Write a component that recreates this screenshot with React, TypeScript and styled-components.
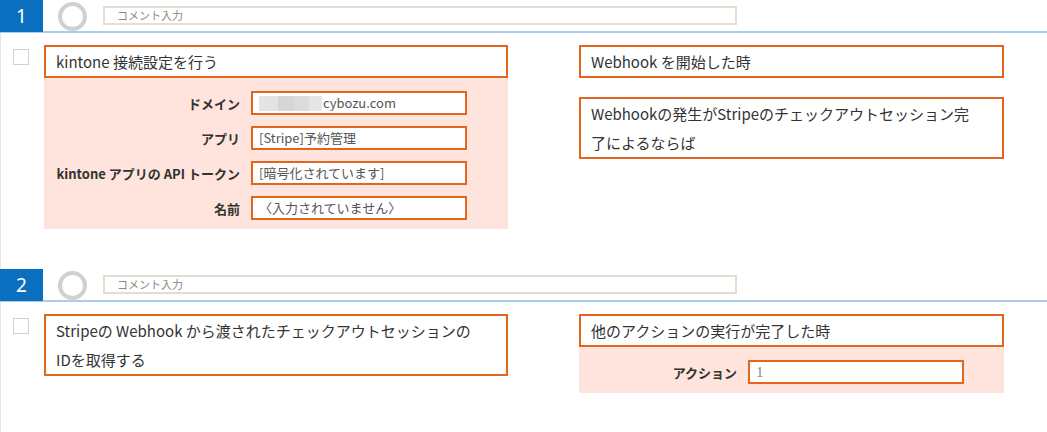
import styled, { createGlobalStyle } from 'styled-components'

const GlobalStyle = createGlobalStyle`
	body {
		margin: 0;
		background: #fff;
		font-family: 'Noto Sans CJK JP', 'Noto Sans', sans-serif;
		color: #333;
	}
`

const orange = '#e2661f'

const Step = styled.section`
	width: 1047px;
`

const StepHeader = styled.div`
	display: flex;
	align-items: flex-start;
	height: 31px;
	border-bottom: 2px solid #a9cdec;
`

const Badge = styled.div`
	width: 43px;
	height: 32px;
	background: #0b6fbf;
	color: #fff;
	font-family: 'Noto Sans', sans-serif;
	font-size: 19px;
	display: flex;
	align-items: center;
	justify-content: center;
	flex-shrink: 0;
`

const Ring = styled.svg`
	margin: 1px 0 0 14px;
	flex-shrink: 0;
`

const CommentInput = styled.div`
	margin: 6px 0 0 15px;
	width: 606px;
	height: 15px;
	border: 2px solid #e6ddd2;
	padding: 0 12px;
	font-size: 11px;
	line-height: 15px;
	color: #888;
`

const StepBody = styled.div<{ $bottom: number }>`
	display: flex;
	padding: 12px 0 ${p => p.$bottom}px 0;
	border-left: 1px solid #e6e6e6;
`

const LeftCol = styled.div`
	display: flex;
	align-items: flex-start;
	width: 507px;
	padding-left: 12px;
	box-sizing: border-box;
	gap: 15px;
`

const RightCol = styled.div`
	display: flex;
	flex-direction: column;
	gap: 19px;
	width: 425px;
	margin-left: 71px;
`

const Checkbox = styled.div`
	width: 14px;
	height: 14px;
	border: 1px solid #d9cfc4;
	margin-top: 4px;
	flex-shrink: 0;
`

const Card = styled.div`
	flex: 1;
	display: flex;
	flex-direction: column;
`

const TitleBox = styled.div`
	border: 2px solid ${orange};
	padding: 0 26px 0 10px;
	font-size: 15px;
	line-height: 29px;
	color: #333;
	background: #fff;
`

const Panel = styled.div<{ $label: number }>`
	background: #fee4dc;
	display: grid;
	grid-template-columns: ${p => p.$label}px 216px;
	column-gap: 11px;
	row-gap: 11px;
	padding: 13px 0 9px;
	align-items: center;
`

const Label = styled.div`
	text-align: right;
	font-size: 13px;
	font-weight: bold;
	color: #333;
	white-space: nowrap;
`

const Field = styled.div<{ $serif?: boolean }>`
	height: 20px;
	border: 2px solid ${orange};
	background: #fff;
	padding: 0 6px;
	font-size: ${p => (p.$serif ? 15 : 13)}px;
	line-height: 20px;
	color: ${p => (p.$serif ? '#888' : '#555')};
	white-space: nowrap;
	display: flex;
	align-items: center;
	font-family: ${p => (p.$serif ? "'Liberation Serif', serif" : 'inherit')};
`

const Blur = styled.span`
	display: inline-block;
	width: 63px;
	height: 15px;
	background: linear-gradient(90deg, #e4e4e4 0 30%, #d6d6d6 30% 55%, #dcdcdc 55% 80%, #e6e6e6 80% 100%);
	margin-right: 1px;
`

const Progress = () => (
	<Ring width="31" height="31" viewBox="0 0 31 31">
		<circle cx="15.5" cy="15.5" r="12.5" fill="none" stroke="#d0d0d0" strokeWidth="4" />
	</Ring>
)

const Header = ({ n }: { n: number }) => (
	<StepHeader>
		<Badge>{n}</Badge>
		<Progress />
		<CommentInput>コメント入力</CommentInput>
	</StepHeader>
)

export default function App() {
	return (
		<>
			<GlobalStyle />
			<Step>
				<Header n={1} />
				<StepBody $bottom={40}>
					<LeftCol>
						<Checkbox />
						<Card>
							<TitleBox>kintone 接続設定を行う</TitleBox>
							<Panel $label={196}>
								<Label>ドメイン</Label>
								<Field>
									<Blur />
									cybozu.com
								</Field>
								<Label>アプリ</Label>
								<Field>[Stripe]予約管理</Field>
								<Label>kintone アプリの API トークン</Label>
								<Field>[暗号化されています]</Field>
								<Label>名前</Label>
								<Field>〈入力されていません〉</Field>
							</Panel>
						</Card>
					</LeftCol>
					<RightCol>
						<TitleBox>Webhook を開始した時</TitleBox>
						<TitleBox>Webhookの発生がStripeのチェックアウトセッション完了によるならば</TitleBox>
					</RightCol>
				</StepBody>
			</Step>
			<Step>
				<Header n={2} />
				<StepBody $bottom={40}>
					<LeftCol>
						<Checkbox />
						<Card>
							<TitleBox>Stripeの Webhook から渡されたチェックアウトセッションのIDを取得する</TitleBox>
						</Card>
					</LeftCol>
					<RightCol>
						<Card>
							<TitleBox>他のアクションの実行が完了した時</TitleBox>
							<Panel $label={158}>
								<Label>アクション</Label>
								<Field $serif>1</Field>
							</Panel>
						</Card>
					</RightCol>
				</StepBody>
			</Step>
		</>
	)
}
